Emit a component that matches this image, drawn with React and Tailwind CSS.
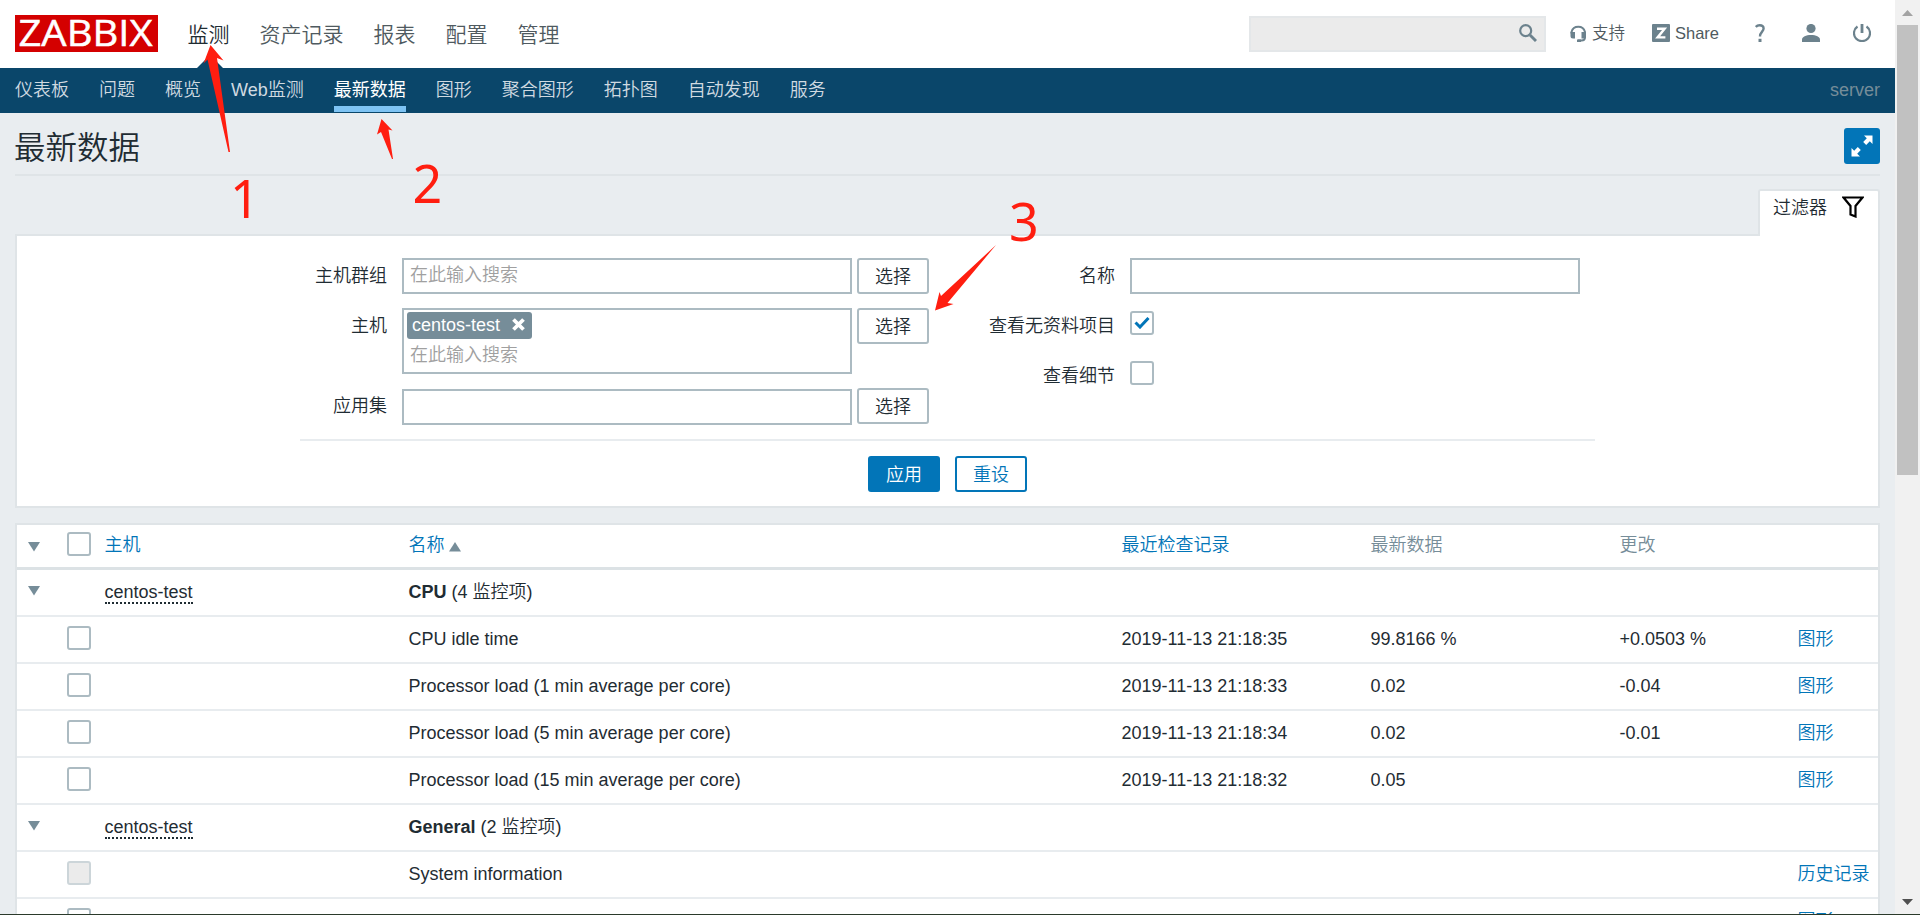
const topMenu = ['监测', '资产记录', '报表', '配置', '管理']
const subMenu = ['仪表板', '问题', '概览', 'Web监测', '最新数据', '图形', '聚合图形', '拓扑图', '自动发现', '服务']

const rows = [
  { group: 'CPU', count: '(4 监控项)' },
  { name: 'CPU idle time', time: '2019-11-13 21:18:35', value: '99.8166 %', change: '+0.0503 %', link: '图形' },
  { name: 'Processor load (1 min average per core)', time: '2019-11-13 21:18:33', value: '0.02', change: '-0.04', link: '图形' },
  { name: 'Processor load (5 min average per core)', time: '2019-11-13 21:18:34', value: '0.02', change: '-0.01', link: '图形' },
  { name: 'Processor load (15 min average per core)', time: '2019-11-13 21:18:32', value: '0.05', link: '图形' },
  { group: 'General', count: '(2 监控项)' },
  { name: 'System information', link: '历史记录', disabled: true },
  { link: '图形' },
]

const COLS = 'grid grid-cols-[50px_37.5px_304px_713px_249px_249px_178px_80.5px]'

function Header() {
  return (
    <header className="flex h-[68px] items-start bg-white px-[15px]">
      <div className="mt-[15px] h-[37px] w-[142.5px] bg-[#d40000] font-['Open_Sans','Noto_Sans',sans-serif] font-normal">
        <svg width="142" height="37" className="block overflow-visible">
          <text x="3.5" y="31" fontSize="36" textLength="134" lengthAdjust="spacingAndGlyphs" fill="white" stroke="white" strokeWidth="0.5">ZABBIX</text>
        </svg>
      </div>
      <nav className="ml-[30px] flex gap-[30px] pt-[19px] text-[21px] leading-[32px] text-[#4f5a60]">
        {topMenu.map((item, i) => (
          <a key={item} className={i === 0 ? 'relative h-[49px] text-[#1f2c33]' : ''}>
            {item}
            {i === 0 && (
              <svg width="26" height="13" className="absolute bottom-0 left-[9px]">
                <path d="M0 13 13 0 26 13Z" fill="#0a466a" />
              </svg>
            )}
          </a>
        ))}
      </nav>
      <div className="ml-auto flex pt-4">
        <div className="flex h-9 w-[297px] items-start justify-end border-2 border-[#e4e7e9] bg-[#ebebeb] pr-[7px] pt-[6px]">
          <svg width="18" height="18" viewBox="0 0 18 18" fill="none" stroke="#6c828d">
            <circle cx="6.700" cy="6.700" r="5.500" strokeWidth="2.200" />
            <path d="m11 11 6 6" strokeWidth="2.900" />
          </svg>
        </div>
      </div>
      <div className="flex h-[68px] w-[334px] items-center pb-[2px] pl-[24px] text-[#6c828d]">
        <svg width="17" height="18" viewBox="0 0 17 18">
          <path d="M1.500 9.500v-1.500a7 7 0 0 1 13.500 0v5c0 2-1.500 3.500-3.500 3.500H8" fill="none" stroke="currentColor" strokeWidth="2" />
          <path d="M.5 8h4.500v6.500H3A2.500 2.500 0 0 1 .5 12ZM11.500 8H16v4a2.500 2.500 0 0 1-2.500 2.500h-2ZM7 15.500h4V18H7Z" fill="currentColor" />
        </svg>
        <span className="ml-[5px] mt-px w-[33px] whitespace-nowrap text-[16.5px] text-[#4f5a60]">支持</span>
        <svg width="18" height="18" viewBox="0 0 18 18" className="ml-[27px]">
          <rect width="18" height="18" rx="1" fill="currentColor" />
          <path d="M5 4.800h7.600L5.600 13.400h7.800" fill="none" stroke="white" strokeWidth="2.400" />
        </svg>
        <span className="ml-[5px] w-[44px] text-[16.5px] text-[#4f5a60]">Share</span>
        <svg width="10" height="18" viewBox="0 0 10 18" className="ml-[36px]" fill="none" stroke="currentColor" strokeWidth="2.400">
          <path d="M.8 3C1.800 1.800 3 1.300 4.600 1.300c2.400 0 4 1.200 4 3.300C8.600 7.500 5 8 5 12.500" />
          <path d="M5 14.800v3.200" strokeWidth="3" />
        </svg>
        <svg width="18" height="18" viewBox="0 0 18 18" className="ml-[37px]" fill="currentColor">
          <circle cx="9" cy="4.500" r="4.600" />
          <path d="M0 18v-2.500c0-2.500 4-4.500 9-4.500s9 2 9 4.500V18Z" />
        </svg>
        <svg width="18" height="18" viewBox="0 0 18 18" className="ml-[33px]" fill="none" stroke="currentColor" strokeWidth="2.200">
          <path d="M4.500 2.500a8 8 0 1 0 9 0" />
          <path d="M9 0v9" strokeWidth="2.800" />
        </svg>
      </div>
    </header>
  )
}

function SubMenu() {
  return (
    <nav className="flex h-[45px] items-start gap-[30px] bg-[#0a466a] px-[15px] text-[18px] leading-[45px] text-[#d0dae1]">
      {subMenu.map((item) => (
        <a
          key={item}
          className={item === '最新数据' ? 'h-[44px] border-b-[6px] border-[#7ec3f3] font-normal text-white' : ''}
        >
          {item}
        </a>
      ))}
      <span className="ml-auto text-[#768d99]">server</span>
    </nav>
  )
}

function Checkbox({ checked, disabled }) {
  return (
    <span
      className={`flex h-6 w-6 items-center justify-center rounded-[3px] border-2 ${
        disabled ? 'border-[#ccd5d9] bg-[#ebebeb]' : 'border-[#acbbc2] bg-white'
      }`}
    >
      {checked && (
        <svg width="16" height="12" viewBox="0 0 16 12">
          <path d="M1.500 5.500 6 10 14.500 1" fill="none" stroke="#0275b8" strokeWidth="3" />
        </svg>
      )}
    </span>
  )
}

function SelectButton() {
  return (
    <button className="ml-[5px] h-9 w-[72px] rounded-[3px] border-2 border-[#acbbc2] bg-white pt-px leading-[32px]">
      选择
    </button>
  )
}

function Label({ children, width = 'w-[87px]' }) {
  return <label className={`${width} mr-[15px] text-right leading-[36px]`}>{children}</label>
}

function Filter() {
  return (
    <section>
      <div className="flex justify-end">
        <div className="relative -mb-[2px] flex h-[47px] w-[122px] rounded-t-[3px] border-2 border-b-0 border-[#dfe4e7] bg-white pl-[13px] leading-[34px]">
          过滤器
          <svg width="22" height="22" viewBox="0 0 22 22" className="ml-[15px] mt-[5px]">
            <path d="M1.500 1.500h19L13.500 10v10.500l-5-2V10Z" fill="none" stroke="black" strokeWidth="2.200" />
          </svg>
        </div>
      </div>
      <div className="h-[274px] border-2 border-[#dfe4e7] bg-white">
        <div className="ml-[283px] flex h-[205px] w-[1295px] border-b-2 border-[#e8ecef] pt-[22px]">
          <div className="flex w-[629px] flex-col">
            <div className="flex h-[50px]">
              <Label>主机群组</Label>
              <div className="h-9 w-[450px] border-2 border-[#acbbc2] pl-[6px] leading-[31px] text-[#a0a0a0]">在此输入搜索</div>
              <SelectButton />
            </div>
            <div className="flex h-[80px]">
              <Label>主机</Label>
              <div className="h-[66px] w-[450px] border-2 border-[#acbbc2] pl-[3px] pt-[2px]">
                <div className="flex h-[27px] w-[125px] items-center rounded-[3px] bg-[#768d99] pl-[5px] text-white">
                  <span className="-mt-[2px] leading-[24px]">centos-test</span>
                  <svg width="13" height="13" viewBox="0 0 13 13" className="-mt-[2px] ml-[12px]">
                    <path d="m1.500 1.500 10 10m0-10-10 10" stroke="white" strokeWidth="3.800" />
                  </svg>
                </div>
                <div className="pl-[3px] leading-[33px] text-[#a0a0a0]">在此输入搜索</div>
              </div>
              <SelectButton />
            </div>
            <div className="flex">
              <Label>应用集</Label>
              <div className="mt-px h-9 w-[450px] border-2 border-[#acbbc2]" />
              <SelectButton />
            </div>
          </div>
          <div className="flex flex-col">
            <div className="flex h-[50px]">
              <Label width="w-[186px]">名称</Label>
              <div className="h-9 w-[450px] border-2 border-[#acbbc2]" />
            </div>
            <div className="flex h-[50px]">
              <Label width="w-[186px]">查看无资料项目</Label>
              <div className="pt-[3px]"><Checkbox checked /></div>
            </div>
            <div className="flex">
              <Label width="w-[186px]">查看细节</Label>
              <div className="pt-[3px]"><Checkbox /></div>
            </div>
          </div>
        </div>
        <div className="flex gap-[15px] pl-[851px] pt-[15px]">
          <button className="h-9 w-[72px] rounded-[3px] bg-[#0275b8] pt-px leading-[36px] text-white">应用</button>
          <button className="h-9 w-[72px] rounded-[3px] border-2 border-[#0275b8] bg-white pt-px leading-[32px] text-[#0275b8]">重设</button>
        </div>
      </div>
    </section>
  )
}

function Triangle({ up }) {
  return (
    <svg width="12" height="10" viewBox="0 0 12 10" className="inline-block">
      <path d={up ? 'M0 9.500h12L6 0Z' : 'M0 0h12L6 9.500Z'} fill="#768d99" />
    </svg>
  )
}

function DataTable() {
  return (
    <section className="mt-[15px] border-2 border-b-0 border-[#dfe4e7] bg-white">
      <div className={`${COLS} h-[45px] border-b-[3px] border-[#dce2e5] leading-[41px] text-[#0275b8]`}>
        <span className="flex pl-[11px] pt-[17px]"><Triangle /></span>
        <span className="pt-[7px]"><Checkbox /></span>
        <span>主机</span>
        <span className="flex items-start">
          名称 <span className="ml-[4px] flex pt-[17px]"><Triangle up /></span>
        </span>
        <span>最近检查记录</span>
        <span className="text-[#768d99]">最新数据</span>
        <span className="text-[#768d99]">更改</span>
      </div>
      {rows.map((row, i) => (
        <div key={i} className={`${COLS} h-[47px] border-b-2 border-[#e8ecef] leading-[44px]`}>
          <span className="flex pl-[11px] pt-[16px]">{row.group && <Triangle />}</span>
          <span className="pt-[9px]">{!row.group && <Checkbox disabled={row.disabled} />}</span>
          <span className="flex items-start">
            {row.group && (
              <span className="mt-[11px] h-[23px] border-b-2 border-dotted border-[#1f2c33] leading-[22px]">centos-test</span>
            )}
          </span>
          <span>
            {row.group ? <><b className="font-bold">{row.group}</b> {row.count}</> : row.name}
          </span>
          <span>{row.time}</span>
          <span>{row.value}</span>
          <span>{row.change}</span>
          <span className="whitespace-nowrap text-[#0275b8]">{row.link}</span>
        </div>
      ))}
    </section>
  )
}

function Scrollbar() {
  return (
    <div className="flex h-full w-[25px] flex-col items-center bg-[#f1f1f1]">
      <svg width="25" height="25"><path d="M7 16h11l-5.500-6Z" fill="#a3a3a3" /></svg>
      <div className="h-[450px] w-[21px] bg-[#c1c1c1]" />
      <svg width="25" height="25" className="mt-auto"><path d="M7 10h11l-5.500 6Z" fill="#505050" /></svg>
    </div>
  )
}

// red arrows and step numbers drawn over the page
function Annotations() {
  return (
    <svg width="1920" height="915" className="pointer-events-none absolute left-0 top-0" fill="#ff1e10">
      <path d="M210.500 45 223.500 60.500 217 58 230 152H228.500L207.500 59.500 203.500 63.500Z" />
      <path d="M381.500 119 392.500 130.500 388.500 129.500 393 159H392L381 132 377 134.500Z" />
      <path d="M996 245 947.500 303 953.500 304 935 310.500 939.500 292 941 296Z" />
      <g fontFamily="'Noto Sans', sans-serif" fontSize="52" fontWeight="400">
        <text x="230" y="217.500">1</text>
        <text x="412.500" y="202.500">2</text>
        <text x="1009" y="240.500">3</text>
      </g>
    </svg>
  )
}

export default function App() {
  return (
    <div className="relative flex h-[915px] w-[1920px] overflow-hidden border-b border-[#2b3a2b] bg-[#e9edf0] font-['Liberation_Sans','Noto_Sans_CJK_SC',sans-serif] text-[18px] font-[350] text-[#1f2c33]">
      <div className="w-[1895px]">
        <Header />
        <SubMenu />
        <main className="px-[15px]">
          <div className="mb-[13px] flex h-[63px] items-start justify-between border-b-2 border-[#dfe4e7]">
            <h1 className="-ml-px pt-[11px] text-[31.5px] font-[350] leading-[48px]">最新数据</h1>
            <button className="mt-[15px] flex h-9 w-9 items-center justify-center rounded-[3px] bg-[#0275b8]">
              <svg width="22" height="22" viewBox="0 0 22 22" fill="white">
                <path d="M13 .5h8.500V9l-2.700-2.700-3.600 3.600-3-3 3.600-3.600Z" />
                <path d="M9 21.500H.5V13l2.700 2.700 3.600-3.600 3 3-3.600 3.600Z" />
              </svg>
            </button>
          </div>
          <Filter />
          <DataTable />
        </main>
      </div>
      <Scrollbar />
      <Annotations />
    </div>
  )
}
